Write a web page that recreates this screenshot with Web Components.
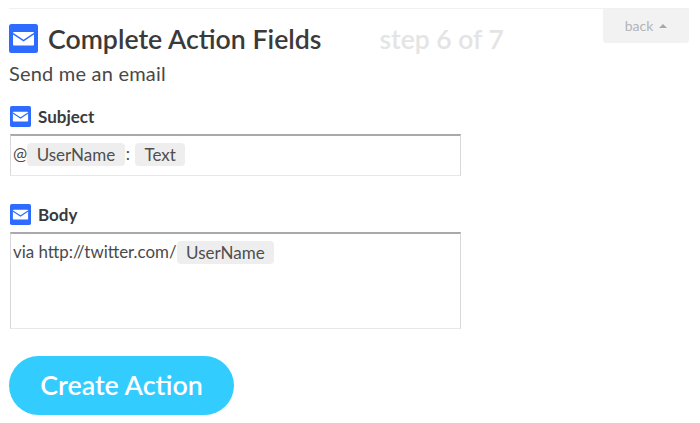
<!DOCTYPE html>
<html><head><meta charset="utf-8">
<style>
html,body{margin:0;padding:0;background:#fff;height:423px;overflow:hidden}
body{font-family:Lato,"Open Sans",sans-serif;color:#404040}
</style></head><body>
<action-page>
  <step-header slot="header" title-text="Complete Action Fields" step="step 6 of 7" sub="Send me an email"></step-header>
  <action-field label="Subject" height="42" gap="21"><span>@</span><ing-tag>UserName</ing-tag><span class="sep">:</span><ing-tag>Text</ing-tag></action-field>
  <action-field label="Body" height="97" gap="28">via http://twitter.com/<ing-tag>UserName</ing-tag></action-field>
  <pill-button>Create Action</pill-button>
</action-page>
<script>
const mail = s => `<svg width="${s}" height="${s}" viewBox="0 0 29 29" style="display:block;flex:none"><rect width="29" height="29" rx="2.5" fill="#2e6cff"/><rect x="4" y="8" width="21" height="13.5" rx="1" fill="#fff"/><path d="M4 9.6 14.5 16.6 25 9.6" fill="none" stroke="#2e6cff" stroke-width="1.5"/></svg>`;
class ActionPage extends HTMLElement{constructor(){super();this.attachShadow({mode:'open'}).innerHTML=`<style>
:host{display:flex;flex-direction:column;width:680px;margin:8px 0 0 9px}
.rule{height:1px;background:#f0f0f0}
</style><div class="rule"></div><slot name="header"></slot><slot></slot>`}}
class StepHeader extends HTMLElement{connectedCallback(){if(this.shadowRoot)return;this.attachShadow({mode:'open'}).innerHTML=`<style>
:host{display:block}
.row{display:flex;align-items:flex-start;height:44px}
.title{display:flex;align-items:center;gap:10px;margin-top:15px;height:29px}
h1{margin:2px 0 0;font:600 26.7px/29px Lato,sans-serif;color:#3a3a3a}
.step{font:600 26.5px/29px Lato,sans-serif;color:#e4e4e4;margin:16px 0 0 58px}
.back{margin-left:auto;width:86px;height:34px;box-sizing:border-box;background:#f2f2f2;border-radius:0 0 3px 3px;color:#b4b4b4;font:14px/34px Lato,sans-serif;display:flex;align-items:center;justify-content:center;gap:6px}
.tri{width:0;height:0;border:4px solid transparent;border-top:0;border-bottom:4px solid #a8a8a8}
.sub{font:20px/24px Lato,sans-serif;letter-spacing:.2px;color:#484848;margin-top:8px}
</style><div class="row"><div class="title">${mail(29)}<h1>${this.getAttribute('title-text')}</h1></div><div class="step">${this.getAttribute('step')}</div><div class="back">back<span class="tri"></span></div></div><div class="sub">${this.getAttribute('sub')}</div>`}}
class ActionField extends HTMLElement{connectedCallback(){if(this.shadowRoot)return;const h=this.getAttribute('height'),g=this.getAttribute('gap');this.attachShadow({mode:'open'}).innerHTML=`<style>
:host{display:block;margin:${g}px 0 0 1px;width:451px}
.label{display:flex;align-items:flex-start;gap:7px;height:22px;font:700 17px/22px Lato,sans-serif;color:#3a3a3a}
.box{box-sizing:border-box;height:${h}px;margin-top:6px;border:1px solid #d8d8d8;border-bottom-color:#e8e8e8;border-top:2px solid #a9a9a9;padding:6px 2px;font:16.9px/24px Lato,sans-serif;color:#4a4a4a;white-space:pre}
::slotted(.sep){margin:0 5px 0 1px}
</style><div class="label">${mail(21)}<span>${this.getAttribute('label')}</span></div><div class="box"><slot></slot></div>`}}
class IngTag extends HTMLElement{constructor(){super();this.attachShadow({mode:'open'}).innerHTML=`<style>
:host{display:inline-block;background:#eeeeee;border-radius:4px;padding:0 9.5px;height:23px;line-height:23px;font-size:17px;color:#4f4f4f;vertical-align:top;margin-top:1px}
</style><slot></slot>`}}
class PillButton extends HTMLElement{constructor(){super();this.attachShadow({mode:'open'}).innerHTML=`<style>
:host{display:flex;align-items:center;justify-content:center;width:225px;height:59px;margin-top:27px;border-radius:30px;background:#33ccff;color:#fff;font:600 26.8px/59px Lato,sans-serif}
</style><slot></slot>`}}
customElements.define('action-page',ActionPage);
customElements.define('step-header',StepHeader);
customElements.define('action-field',ActionField);
customElements.define('ing-tag',IngTag);
customElements.define('pill-button',PillButton);
</script></body></html>
